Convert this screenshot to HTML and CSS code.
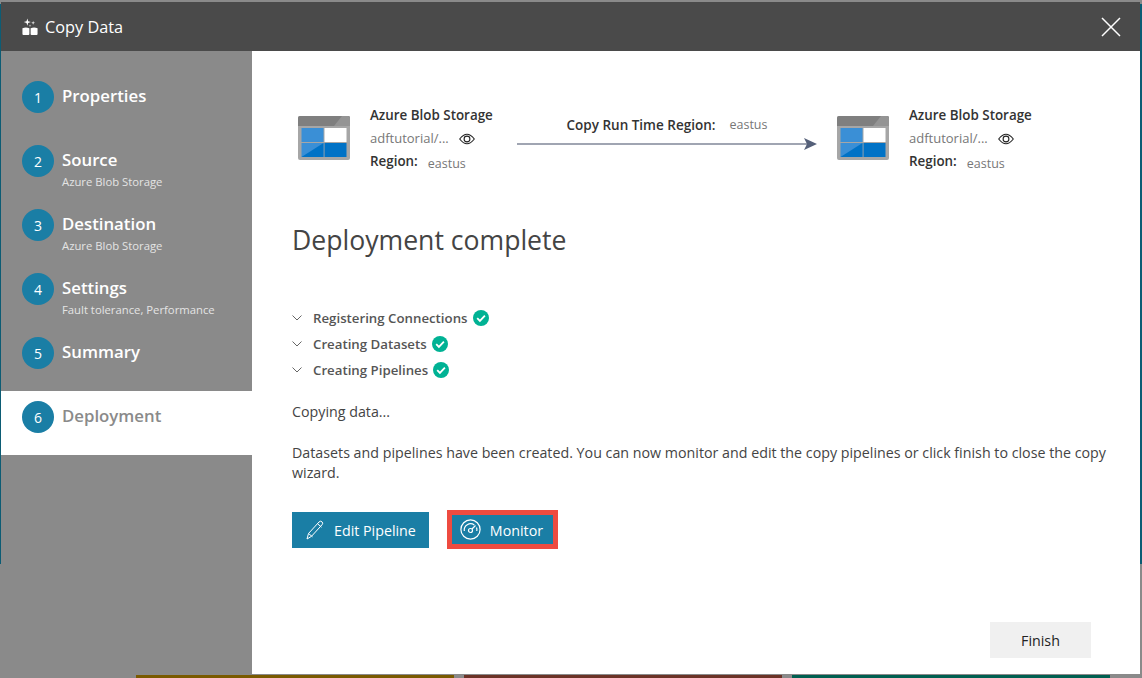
FILE: index.html
```html
<!DOCTYPE html>
<html lang="en">
<head>
    <meta charset="UTF-8">
    <meta name="viewport" content="width=device-width, initial-scale=1.0">
    <title>Copy Data</title>
    <link rel="stylesheet" href="styles.css">
</head>
<body>

<div class="backdrop">
    <div class="backdrop-top"></div>
    <div class="tiles">
        <div class="tile tile-gold"></div>
        <div class="tile tile-brown"></div>
        <div class="tile tile-green"></div>
    </div>
</div>

<div class="dialog">
    <div class="dialog-header">
        <div class="dialog-title">
            <svg class="title-icon" width="16" height="18" viewBox="0 0 18 20">
                <path d="M6 0.500l0.900 3.100 3.100 0.900-3.100 0.900-0.900 3.100-0.900-3.100-3.100-0.900 3.100-0.900z" fill="#fff"/>
                <path d="M12.500 3l0.500 1.800 1.800 0.500-1.800 0.500-0.500 1.800-0.500-1.800-1.800-0.500 1.800-0.500z" fill="#fff"/>
                <path d="M9 7l0.400 1.200 1.200 0.400-1.200 0.400-0.400 1.200-0.400-1.200-1.200-0.400 1.200-0.400z" fill="#ccc"/>
                <path d="M0.500 11.500q3.800-1.600 7.800 0v6.500q0 1-1 1h-5.800q-1 0-1-1z" fill="#fff"/>
                <path d="M9.700 11.500q3.800-1.600 7.800 0v6.500q0 1-1 1h-5.800q-1 0-1-1z" fill="#fff"/>
            </svg>
            <span>Copy Data</span>
        </div>
        <svg class="close-icon" width="20" height="20" viewBox="0 0 20 20">
            <path d="M1 1l18 18M19 1l-18 18" stroke="#fff" stroke-width="1.500" fill="none"/>
        </svg>
    </div>

    <div class="dialog-body">
        <div class="steps">
            <div class="step">
                <div class="step-num">1</div>
                <div class="step-text"><div class="step-name">Properties</div></div>
            </div>
            <div class="step">
                <div class="step-num">2</div>
                <div class="step-text"><div class="step-name">Source</div><div class="step-sub">Azure Blob Storage</div></div>
            </div>
            <div class="step">
                <div class="step-num">3</div>
                <div class="step-text"><div class="step-name">Destination</div><div class="step-sub">Azure Blob Storage</div></div>
            </div>
            <div class="step">
                <div class="step-num">4</div>
                <div class="step-text"><div class="step-name">Settings</div><div class="step-sub">Fault tolerance, Performance</div></div>
            </div>
            <div class="step">
                <div class="step-num">5</div>
                <div class="step-text"><div class="step-name">Summary</div></div>
            </div>
            <div class="step active">
                <div class="step-num">6</div>
                <div class="step-text"><div class="step-name">Deployment</div></div>
            </div>
        </div>

        <div class="content">
            <div class="flow">
                <div class="store">
                    <svg class="store-icon" width="52" height="44" viewBox="0 0 52 44">
                        <rect width="52" height="44" rx="2" fill="#a6a6a6"/>
                        <path d="M0 2q0-2 2-2h48q2 0 2 2v8h-52z" fill="#7f7f7f"/>
                        <path d="M44 0h6q2 0 2 2v8h-16z" fill="#949494"/>
                        <rect x="3.500" y="12" width="22" height="14" fill="#3a8fd6"/>
                        <rect x="26.500" y="12" width="22" height="14" fill="#fff"/>
                        <rect x="3.500" y="27" width="22" height="14" fill="#3a8fd6"/>
                        <path d="M3.500 41l22-14v14z" fill="#0072c6"/>
                        <rect x="26.500" y="27" width="22" height="14" fill="#0072c6"/>
                    </svg>
                    <div class="store-info">
                        <div class="store-name">Azure Blob Storage</div>
                        <div class="store-path">
                            <span>adftutorial/...</span>
                            <svg class="eye" width="16" height="12" viewBox="0 0 16 12">
                                <path d="M0.700 6q7.300-9.500 14.600 0q-7.300 9.500-14.600 0z" fill="none" stroke="#222" stroke-width="1.100"/>
                                <circle cx="8" cy="6" r="2.900" fill="none" stroke="#222" stroke-width="1.100"/>
                            </svg>
                        </div>
                        <div class="store-region"><b>Region:</b><span>eastus</span></div>
                    </div>
                </div>

                <div class="link">
                    <div class="link-label"><b>Copy Run Time Region:</b><span>eastus</span></div>
                    <svg class="arrow" width="300" height="14" viewBox="0 0 300 14">
                        <rect x="0" y="6" width="290" height="2" fill="#a0a5b2"/>
                        <path d="M287 1l13 6-13 6 3-6z" fill="#556079"/>
                    </svg>
                </div>

                <div class="store">
                    <svg class="store-icon" width="52" height="44" viewBox="0 0 52 44">
                        <rect width="52" height="44" rx="2" fill="#a6a6a6"/>
                        <path d="M0 2q0-2 2-2h48q2 0 2 2v8h-52z" fill="#7f7f7f"/>
                        <path d="M44 0h6q2 0 2 2v8h-16z" fill="#949494"/>
                        <rect x="3.500" y="12" width="22" height="14" fill="#3a8fd6"/>
                        <rect x="26.500" y="12" width="22" height="14" fill="#fff"/>
                        <rect x="3.500" y="27" width="22" height="14" fill="#3a8fd6"/>
                        <path d="M3.500 41l22-14v14z" fill="#0072c6"/>
                        <rect x="26.500" y="27" width="22" height="14" fill="#0072c6"/>
                    </svg>
                    <div class="store-info">
                        <div class="store-name">Azure Blob Storage</div>
                        <div class="store-path">
                            <span>adftutorial/...</span>
                            <svg class="eye" width="16" height="12" viewBox="0 0 16 12">
                                <path d="M0.700 6q7.300-9.500 14.600 0q-7.300 9.500-14.600 0z" fill="none" stroke="#222" stroke-width="1.100"/>
                                <circle cx="8" cy="6" r="2.900" fill="none" stroke="#222" stroke-width="1.100"/>
                            </svg>
                        </div>
                        <div class="store-region"><b>Region:</b><span>eastus</span></div>
                    </div>
                </div>
            </div>

            <h1>Deployment complete</h1>

            <ul class="tasks">
                <li>
                    <svg class="chevron" width="10" height="6" viewBox="0 0 10 6"><path d="M0.500 0.500l4.500 4.500 4.500-4.500" fill="none" stroke="#666" stroke-width="1"/></svg>
                    <span>Registering Connections</span>
                    <svg class="check" width="16" height="16" viewBox="0 0 16 16"><circle cx="8" cy="8" r="8" fill="#00b294"/><path d="M4.200 8.200l2.700 2.700 5-5.300" fill="none" stroke="#fff" stroke-width="1.800"/></svg>
                </li>
                <li>
                    <svg class="chevron" width="10" height="6" viewBox="0 0 10 6"><path d="M0.500 0.500l4.500 4.500 4.500-4.500" fill="none" stroke="#666" stroke-width="1"/></svg>
                    <span>Creating Datasets</span>
                    <svg class="check" width="16" height="16" viewBox="0 0 16 16"><circle cx="8" cy="8" r="8" fill="#00b294"/><path d="M4.200 8.200l2.700 2.700 5-5.300" fill="none" stroke="#fff" stroke-width="1.800"/></svg>
                </li>
                <li>
                    <svg class="chevron" width="10" height="6" viewBox="0 0 10 6"><path d="M0.500 0.500l4.500 4.500 4.500-4.500" fill="none" stroke="#666" stroke-width="1"/></svg>
                    <span>Creating Pipelines</span>
                    <svg class="check" width="16" height="16" viewBox="0 0 16 16"><circle cx="8" cy="8" r="8" fill="#00b294"/><path d="M4.200 8.200l2.700 2.700 5-5.300" fill="none" stroke="#fff" stroke-width="1.800"/></svg>
                </li>
            </ul>

            <p class="status">Copying data...</p>
            <p class="note">Datasets and pipelines have been created. You can now monitor and edit the copy pipelines or click finish to close the copy wizard.</p>

            <div class="actions">
                <button class="btn btn-edit" type="button">
                    <svg width="19" height="20" viewBox="0 0 19 20">
                        <path d="M1 19l1.500-5.500 10.500-11.500q1.500-1.500 3-0.200t0 3l-10.500 11.500zM2.500 13.500l4 3.300M11.500 3.700l4 3.500" fill="none" stroke="#fff" stroke-width="1"/>
                    </svg>
                    <span>Edit Pipeline</span>
                </button>
                <div class="highlight">
                    <button class="btn btn-monitor" type="button">
                        <svg width="21" height="21" viewBox="0 0 21 21">
                            <circle cx="10.500" cy="10.500" r="9.600" fill="none" stroke="#fff" stroke-width="1.200"/>
                            <path d="M4.300 12a6.300 6.300 0 0 1 10-6M16.500 8.500a6.300 6.300 0 0 1 0.300 3.500" fill="none" stroke="#fff" stroke-width="1.200"/>
                            <circle cx="10.500" cy="11.500" r="2" fill="none" stroke="#fff" stroke-width="1.200"/>
                            <path d="M12 10l3.500-3.500" stroke="#fff" stroke-width="1.200"/>
                        </svg>
                        <span>Monitor</span>
                    </button>
                </div>
            </div>

            <div class="footer">
                <button class="btn-finish" type="button">Finish</button>
            </div>
        </div>
    </div>
</div>

</body>
</html>
```

FILE: styles.css
```css
body {
    margin: 0;
    height: 678px;
    overflow: hidden;
    background-color: #8a8a8a;
    font-family: "Open Sans", "Noto Sans", Arial, sans-serif;
    color: #444;
}

/* what shows round the dialog */
.backdrop {
    height: 678px;
    display: flex;
    flex-direction: column;
    justify-content: space-between;
}
.backdrop-top {
    height: 560px;
    margin-top: 4px;
    background-color: #0c5c74;
}
.tiles {
    height: 3px;
    display: flex;
    padding-left: 136px;
}
.tile {
    width: 318px;
    margin-right: 10px;
}
.tile-gold { background-color: #7a5a00; }
.tile-brown { background-color: #6b3226; }
.tile-green { background-color: #005f50; }

.dialog {
    position: absolute;
    left: 1px;
    top: 2px;
    width: 1139px;
    height: 672px;
    display: flex;
    flex-direction: column;
    background-color: #fff;
}
.dialog-header {
    height: 49px;
    flex: none;
    display: flex;
    align-items: center;
    justify-content: space-between;
    padding: 0 19px 0 21px;
    background-color: #4a4a4a;
    color: #fff;
}
.dialog-title {
    display: flex;
    align-items: center;
    gap: 7px;
    font-size: 16.300px;
}
.dialog-body {
    flex: 1;
    display: flex;
    min-height: 0;
}

/* wizard steps */
.steps {
    width: 251px;
    flex: none;
    padding-top: 20px;
    background-color: #8a8a8a;
    color: #fff;
}
.step {
    height: 54px;
    display: flex;
    padding: 10px 0 0 21px;
}
.step.active {
    background-color: #fff;
    color: #8a8a8a;
}
.step-num {
    width: 32px;
    height: 32px;
    flex: none;
    border-radius: 50%;
    background-color: #1a7ea5;
    color: #fff;
    font-size: 14px;
    line-height: 34px;
    text-align: center;
}
.step-text {
    margin-left: 8px;
}
.step-name {
    font-size: 16.800px;
    font-weight: 600;
    line-height: 30px;
}
.step-sub {
    font-size: 11.300px;
    line-height: 14px;
    color: #e4e4e4;
}

/* right hand side */
.content {
    flex: 1;
    position: relative;
    padding: 0 30px 0 40px;
    font-size: 14.250px;
}
.flow {
    display: flex;
    align-items: flex-start;
    padding: 53px 0 0 6px;
}
.store {
    display: flex;
    width: 219px;
}
.store-icon {
    flex: none;
    margin-top: 12px;
}
.store-info {
    margin-left: 20px;
    font-size: 13.400px;
    line-height: 23px;
}
.store-name {
    font-weight: 600;
    color: #333;
    white-space: nowrap;
}
.store-path {
    display: flex;
    align-items: center;
    gap: 10px;
    font-size: 13px;
    color: #777;
}
.store-region {
    display: flex;
    gap: 10px;
}
.store-region b {
    font-weight: 600;
    color: #333;
}
.store-region span {
    color: #777;
    font-size: 12.500px;
    padding-top: 2px;
}
.link {
    width: 300px;
    margin-right: 20px;
    padding-top: 9px;
}
.link-label {
    display: flex;
    justify-content: center;
    gap: 14px;
    font-size: 13.500px;
    line-height: 24px;
    color: #777;
}
.link-label b {
    font-weight: 600;
    color: #333;
}
.link-label span {
    font-size: 12.500px;
}
.arrow {
    display: block;
}
h1 {
    margin: 46px 0 0;
    font-size: 26.600px;
    font-weight: 400;
    line-height: 38px;
    color: #444;
}
.tasks {
    list-style: none;
    margin: 46px 0 0;
    padding: 0;
}
.tasks li {
    height: 26px;
    display: flex;
    align-items: center;
    font-size: 13.250px;
    font-weight: 600;
    color: #555;
}
.chevron {
    margin-right: 11px;
}
.check {
    margin-left: 5px;
}
.status {
    margin: 19px 0 0;
    line-height: 20px;
}
.note {
    margin: 21px 0 0;
    line-height: 20px;
}
.actions {
    display: flex;
    align-items: center;
    gap: 18px;
    margin-top: 27px;
}
.btn {
    display: flex;
    align-items: center;
    height: 36px;
    padding: 0 14px;
    gap: 9px;
    border: none;
    background-color: #1a7ea5;
    color: #fff;
    font-family: inherit;
    font-size: 14.250px;
}
.btn span {
    padding-top: 2px;
}
.btn-edit {
    padding-right: 13px;
}
.highlight {
    padding: 5px;
    background-color: #ee4b40;
}
.btn-monitor {
    height: 29px;
    padding: 0 10px 0 8px;
}
.footer {
    position: absolute;
    right: 49px;
    bottom: 16px;
}
.btn-finish {
    width: 101px;
    height: 36px;
    border: none;
    background-color: #f0f0f0;
    color: #222;
    font-family: inherit;
    font-size: 14.250px;
}
```
